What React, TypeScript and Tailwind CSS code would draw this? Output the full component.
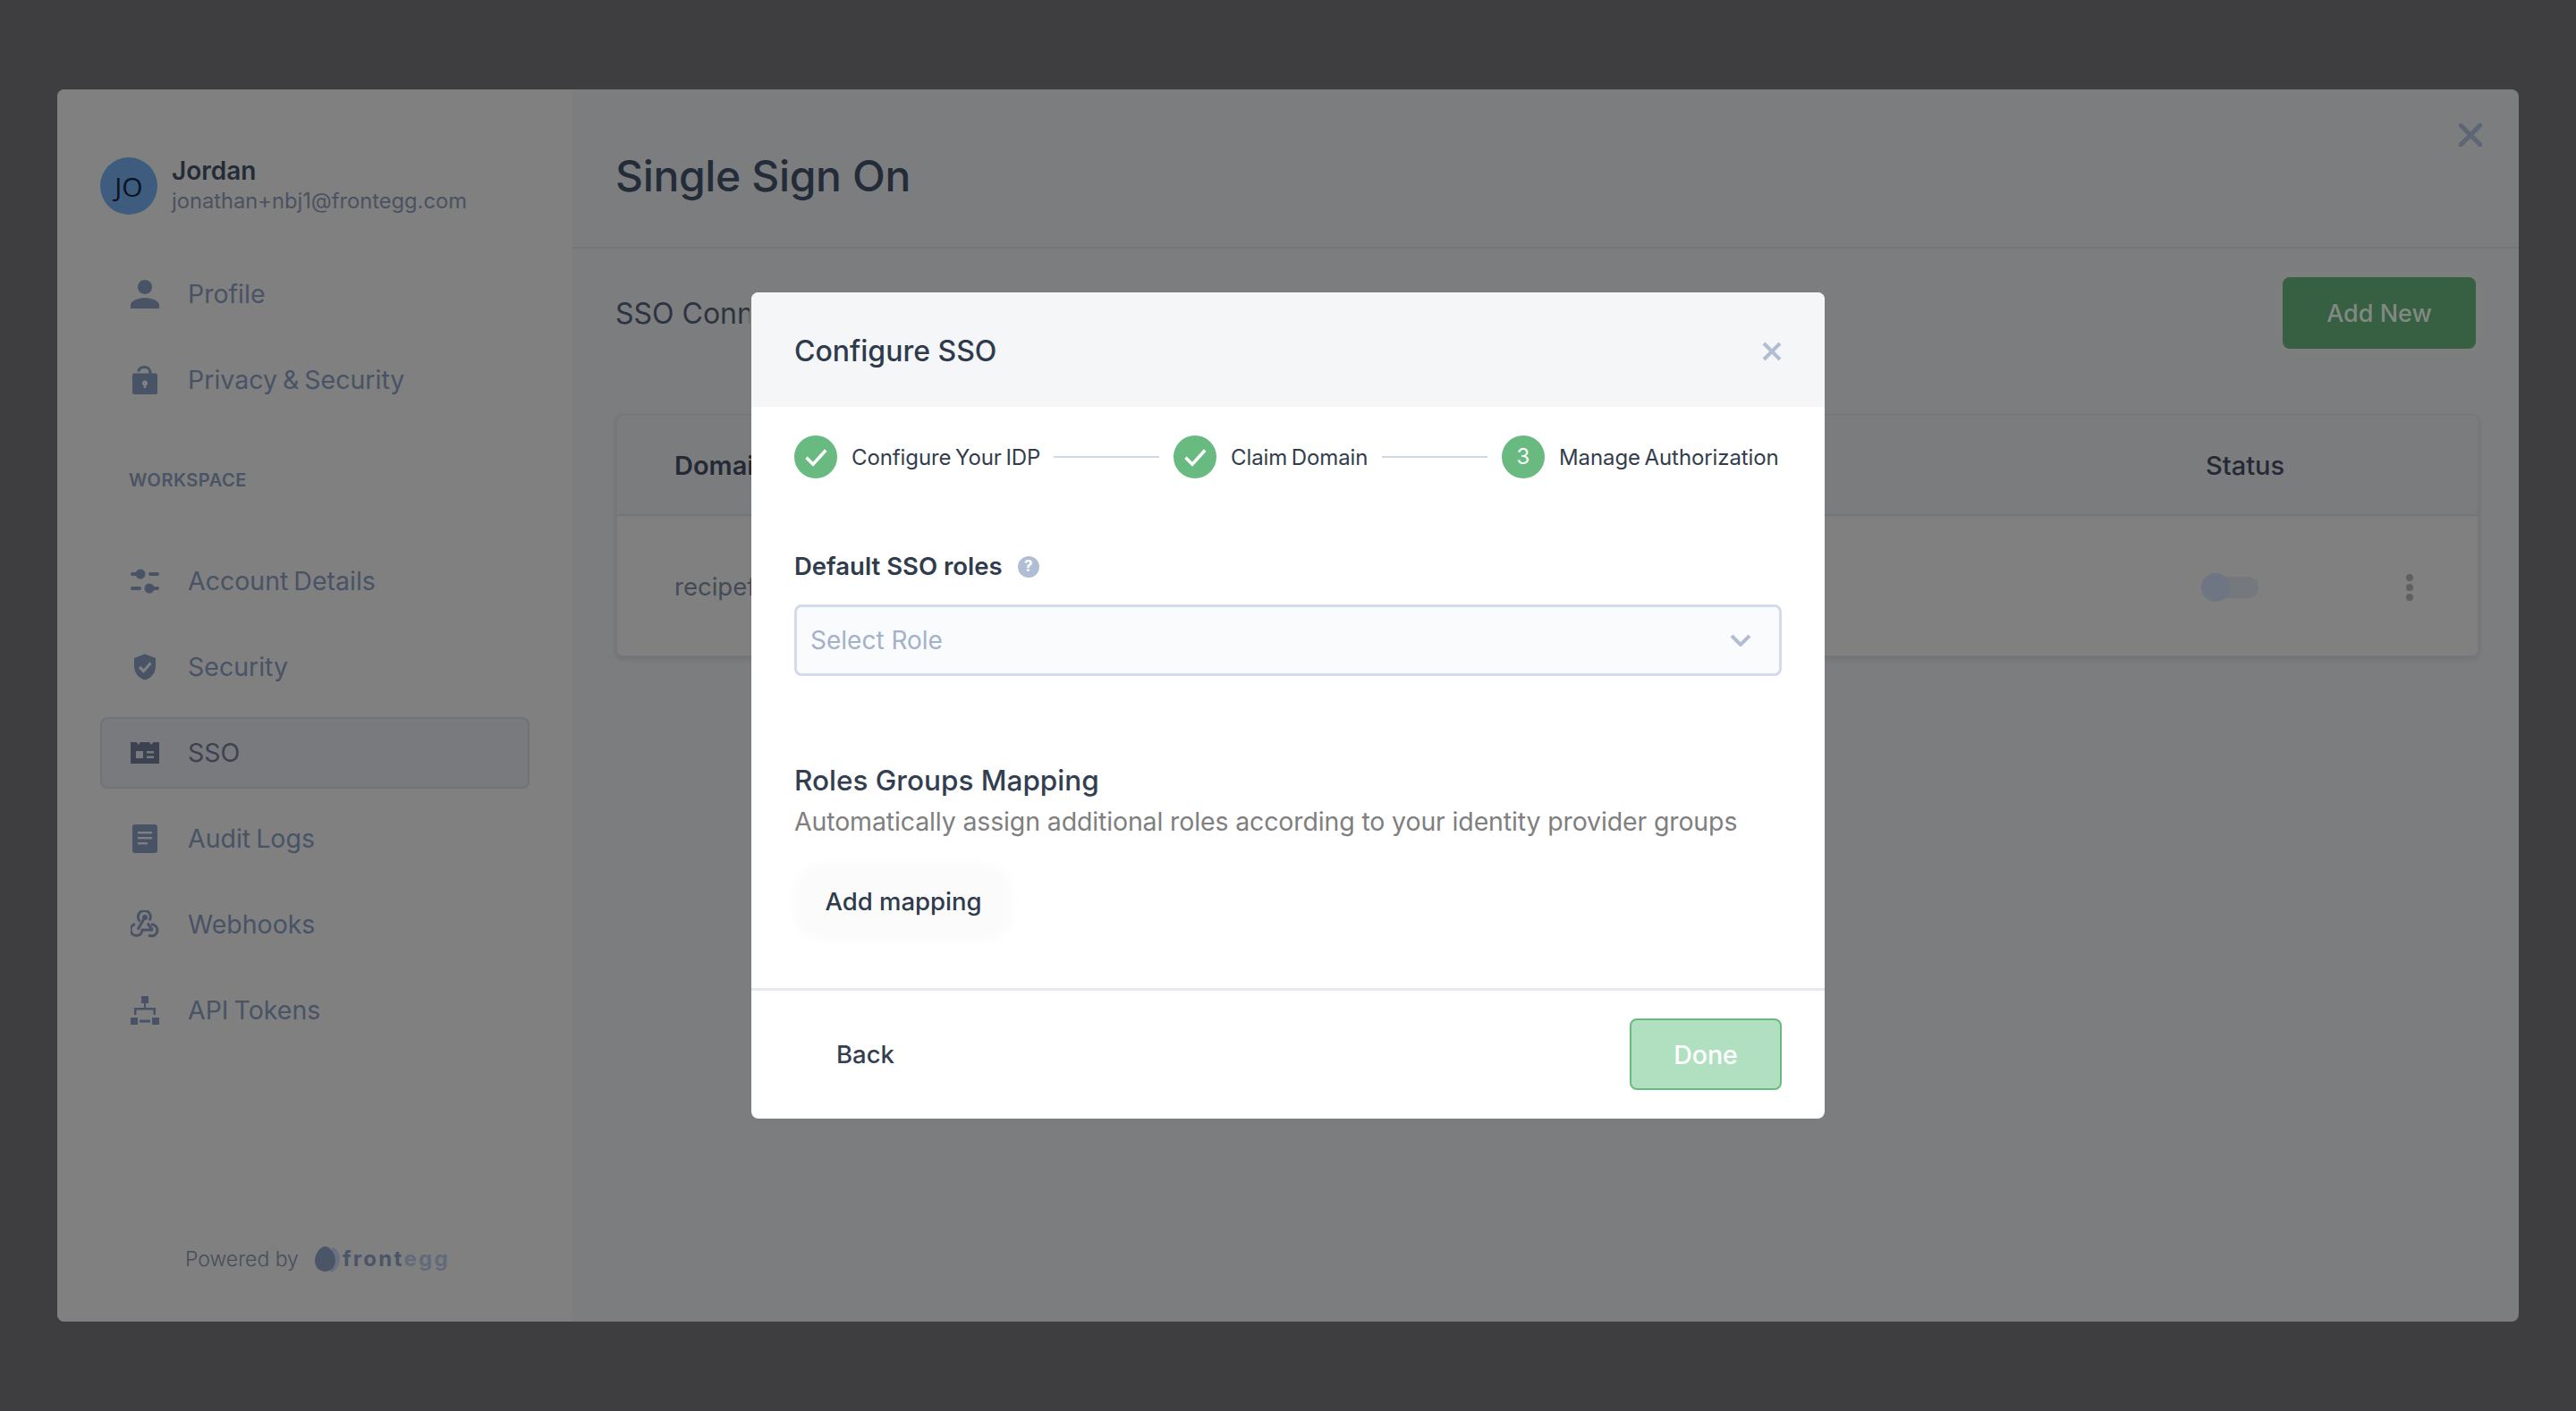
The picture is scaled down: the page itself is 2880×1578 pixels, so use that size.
import type { ReactNode } from 'react'

function ProfileIcon() {
  return (
    <svg viewBox="4 4 16 16" className="h-8 w-8 fill-current">
      <path d="M12 12c2.21 0 4-1.79 4-4s-1.79-4-4-4-4 1.79-4 4 1.79 4 4 4zm0 2c-2.67 0-8 1.34-8 4v2h16v-2c0-2.66-5.33-4-8-4z" />
    </svg>
  )
}

function LockIcon() {
  return (
    <svg viewBox="0 0 32 32" className="h-8 w-8">
      <path d="M8.500 6.500C9.500 3 12 1.500 15.500 1.500 19 1.500 22 4 22 8v3" fill="none" stroke="currentColor" strokeWidth="3" />
      <rect x="2" y="8.500" width="28" height="23.500" rx="2" fill="currentColor" />
      <circle cx="16" cy="19.500" r="3" fill="#808080" />
      <rect x="14.700" y="20" width="2.600" height="5" fill="#808080" />
    </svg>
  )
}

function SlidersIcon() {
  return (
    <svg viewBox="0 0 32 32" className="h-8 w-8 fill-current">
      <circle cx="11" cy="8" r="5.500" />
      <rect x="0" y="6" width="10" height="4" rx="2" />
      <rect x="20" y="6" width="12" height="4" rx="2" />
      <circle cx="21" cy="24" r="5.500" />
      <rect x="0" y="22" width="12" height="4" rx="2" />
      <rect x="22" y="22" width="10" height="4" rx="2" />
    </svg>
  )
}

function ShieldIcon() {
  return (
    <svg viewBox="0 0 32 32" className="h-8 w-8">
      <path d="M16 1.500 28 6v9c0 7.500-5 13.500-12 15.500C9 28.500 4 22.500 4 15V6z" fill="currentColor" />
      <path d="m10 16 4.500 4.500L22.500 11.500" fill="none" stroke="#808080" strokeWidth="3.200" />
    </svg>
  )
}

function SsoIcon() {
  return (
    <svg viewBox="0 0 32 32" className="h-8 w-8">
      <path d="M0 4h6.500l2.500 3 2-3h10l2 3 2.500-3H32v24H0z" fill="currentColor" />
      <rect x="6" y="14" width="8" height="8" fill="#797a7e" />
      <rect x="18" y="14" width="8" height="2.500" fill="#797a7e" />
      <rect x="18" y="19.500" width="8" height="2.500" fill="#797a7e" />
    </svg>
  )
}

function DocIcon() {
  return (
    <svg viewBox="0 0 32 32" className="h-8 w-8">
      <rect x="2" y="0" width="28" height="32" rx="3" fill="currentColor" />
      <rect x="8" y="8" width="16" height="2.400" fill="#808080" />
      <rect x="8" y="14" width="16" height="2.400" fill="#808080" />
      <rect x="8" y="20" width="11" height="2.400" fill="#808080" />
    </svg>
  )
}

function WebhookIcon() {
  return (
    <svg viewBox="0 0 32 32" className="h-8 w-8 fill-none stroke-current stroke-[3]">
      <path d="M10.500 12.500a7 7 0 1 1 10.500-1" />
      <path d="M5 15.500a6.500 6.500 0 1 0 8 6.500h12" />
      <path d="M19 14.500 24.500 22M16 8 8 21.500" />
      <path d="M23 15.800a6.500 6.500 0 1 1-3 12" />
      <circle cx="16" cy="8" r="1.500" />
    </svg>
  )
}

function TreeIcon() {
  return (
    <svg viewBox="0 0 32 32" className="h-8 w-8 fill-current">
      <rect x="12" y="0" width="8" height="8" />
      <rect x="15" y="8" width="2" height="5" />
      <path d="M4 13h24v8h-2.500v-5.500h-19V21H4z" />
      <rect x="0" y="24" width="8" height="8" />
      <rect x="24" y="24" width="8" height="8" />
      <rect x="10" y="26.500" width="12" height="3" />
    </svg>
  )
}

function NavRow({ icon, label, active }: { icon: ReactNode; label: string; active?: boolean }) {
  return (
    <div
      className={`flex h-20 w-[480px] items-center gap-8 rounded-lg border-2 px-8 text-[28.500px] [word-spacing:-2px] ${
        active ? 'border-[#707276] bg-[#797a7e] text-[#3c4250]' : 'border-transparent text-[#485366]'
      }`}
    >
      <span className="flex h-8 w-8 items-center justify-center">{icon}</span>
      <span>{label}</span>
    </div>
  )
}

function Step({ label, num, labelWidth }: { label: string; num?: number; labelWidth: string }) {
  return (
    <div className="flex items-center gap-4">
      <div className="flex h-12 w-12 items-center justify-center rounded-full bg-[#68ba80] text-[24px] text-white">
        {num ?? (
          <svg viewBox="0 0 24 24" className="h-9 w-9 fill-none stroke-white stroke-[2.400]">
            <path d="m5 12.500 5 5 9.500-10.500" />
          </svg>
        )}
      </div>
      <span className={`${labelWidth} whitespace-nowrap pt-0.5 text-[24px] tracking-[-0.1px] text-[#333d4c] [word-spacing:-2px]`}>
        {label}
      </span>
    </div>
  )
}

function ConfigureModal() {
  return (
    <div className="absolute inset-0 flex items-center justify-center">
      <div className="flex h-[924px] w-[1200px] flex-col overflow-hidden rounded-lg bg-white">
        <div className="flex h-32 shrink-0 items-center justify-between bg-[#f4f6f8] pl-12 pr-[48px] pt-1">
          <h2 className="text-[32px] font-medium text-[#2f3b4c]">Configure SSO</h2>
          <svg viewBox="0 0 22 22" className="h-[22px] w-[22px] fill-none stroke-[#b0bdd3] stroke-[4]">
            <path d="m2 2 18 18M20 2 2 20" />
          </svg>
        </div>

        <div className="flex flex-1 flex-col px-12">
          <div className="mt-8 flex items-center justify-between">
            <Step label="Configure Your IDP" labelWidth="w-[210px]" />
            <div className="h-0.5 w-[118px] bg-[#d0d9e6]" />
            <Step label="Claim Domain" labelWidth="w-[153px]" />
            <div className="h-0.5 w-[118px] bg-[#d0d9e6]" />
            <Step num={3} label="Manage Authorization" labelWidth="w-[249px]" />
          </div>

          <div className="mt-[87px] flex h-6 items-center gap-[17px]">
            <span className="text-[27.500px] font-semibold text-[#303c4c]">Default SSO roles</span>
            <span className="flex h-6 w-6 items-center justify-center rounded-full bg-[#b0bed5] text-[17px] font-bold text-white">
              ?
            </span>
          </div>

          <div className="mt-[30px] flex h-20 items-center justify-between rounded-lg border-[3px] border-[#d3dbe9] bg-[#fafbfc] pl-[15px] pr-[31px]">
            <span className="text-[28px] text-[#a3b1c9]">Select Role</span>
            <svg viewBox="0 0 24 14" className="h-3.5 w-6 fill-none stroke-[#b0bdd3] stroke-[4]">
              <path d="m2 2 10 10L22 2" />
            </svg>
          </div>

          <h3 className="mt-[97px] h-10 text-[31.500px] font-medium leading-10 text-[#333f50]">Roles Groups Mapping</h3>
          <p className="mt-1.5 h-10 whitespace-nowrap text-[28.500px] leading-10 tracking-[-0.14px] text-[#7f7f7f]">
            Automatically assign additional roles according to your identity provider groups
          </p>

          <div className="ml-2 mt-[35px] flex h-[70px] w-[228px] items-center justify-center rounded-3xl bg-[#fbfbfb] text-[27.500px] font-medium text-[#2f3b4c] shadow-[0_0_14px_8px_#fbfbfb]">
            Add mapping
          </div>
        </div>

        <div className="flex h-[146px] shrink-0 items-start justify-between border-t-[3px] border-[#e8eaf0] pl-[95px] pr-12 pt-[31px]">
          <span className="flex h-20 items-center pt-0.5 text-[27.500px] font-medium text-[#333f50]">Back</span>
          <div className="flex h-20 w-[170px] items-center justify-center rounded-lg border-2 border-[#68ba80] bg-[#b0e0c0] pt-0.5 text-[28.500px] font-medium text-white">
            Done
          </div>
        </div>
      </div>
    </div>
  )
}

export default function App() {
  return (
    <div className="relative h-[1578px] w-[2880px] overflow-hidden bg-[#3e3e40] px-16 py-[100px] font-[family-name:Inter,sans-serif]">
      <div className="relative flex h-full overflow-hidden rounded-lg bg-[#7c7d7f]">
        {/* Sidebar */}
        <aside className="flex w-[576px] shrink-0 flex-col bg-[#808080] pl-12 pt-[76px]">
          <div className="flex h-16 items-center gap-4">
            <div className="flex h-16 w-16 items-center justify-center rounded-full bg-[#3e5c7e] font-[family-name:'Open_Sans',sans-serif] text-[30px] text-[#0c1420]">
              JO
            </div>
            <div className="flex flex-col">
              <span className="-mt-0.5 text-[28px] font-semibold leading-9 text-[#242c37]">Jordan</span>
              <span className="text-[23.700px] leading-8 text-[#4a5260]">jonathan+nbj1@frontegg.com</span>
            </div>
          </div>

          <div className="mt-[49px] flex flex-col gap-4">
            <NavRow icon={<ProfileIcon />} label="Profile" />
            <NavRow icon={<LockIcon />} label="Privacy & Security" />
          </div>

          <div className="mb-[61px] ml-[32px] mt-[60px] h-6 text-[20px] font-semibold leading-6 tracking-[0.5px] text-[#4a5464]">
            WORKSPACE
          </div>

          <div className="flex flex-col gap-4">
            <NavRow icon={<SlidersIcon />} label="Account Details" />
            <NavRow icon={<ShieldIcon />} label="Security" />
            <NavRow icon={<SsoIcon />} label="SSO" active />
            <NavRow icon={<DocIcon />} label="Audit Logs" />
            <NavRow icon={<WebhookIcon />} label="Webhooks" />
            <NavRow icon={<TreeIcon />} label="API Tokens" />
          </div>

          <div className="mb-[54px] ml-[95px] mt-auto flex h-8 items-center">
            <span className="w-[144px] text-[23px] font-light text-[#474e5b]">Powered by</span>
            <svg viewBox="0 0 30 30" className="h-[30px] w-[30px]">
              <path d="M20 2c6 1 9 7 9 13s-4 15-11 15z" fill="#697280" />
              <path d="M12.500 1C18 1 24 9 24 17c0 7-5 12-11.500 12S1 24 1 17C1 9 7 1 12.500 1z" fill="#4a5568" />
            </svg>
            <span className="ml-0.5 text-[24px] font-bold tracking-[2.300px] text-[#4a5568]">
              front<span className="text-[#626b79]">egg</span>
            </span>
          </div>
        </aside>

        {/* Main */}
        <main className="flex min-w-0 flex-1 flex-col">
          <header className="flex h-[178px] shrink-0 items-center border-b-2 border-[#74757a] px-12 pt-[18px]">
            <h1 className="text-[48px] font-medium tracking-[-0.36px] text-[#232c38]">Single Sign On</h1>
          </header>

          <div className="flex flex-col pl-12 pr-12">
            <div className="mt-[32px] flex h-20 items-center justify-between">
              <span className="w-[150px] overflow-hidden whitespace-nowrap pt-0.5 text-[32px] text-[#2d3440]">SSO Connections</span>
              <div className="flex h-20 w-[216px] items-center justify-center rounded-lg bg-[#375f42] pt-0.5 text-[27px] font-medium text-[#808a82] shadow-[0_0_16px_6px_#7e807e]">
                Add New
              </div>
            </div>

            <div className="-mr-1 mt-[73px] overflow-hidden rounded-lg border-2 border-[#76777b] shadow-[0_2px_4px_#707175]">
              <div className="flex h-[112px] items-center border-b-2 border-[#74757a] bg-[#7b7c7e] pl-[64px] pt-0.5 text-[29px] font-semibold text-[#242a35]">
                <span className="flex-1">Domain</span>
                <span className="w-[304px] font-medium">Status</span>
              </div>
              <div className="flex h-[156px] items-center bg-[#808080] pl-[64px] pt-1">
                <div className="flex-1">
                  <span className="block w-[90px] overflow-hidden whitespace-nowrap text-[27.500px] text-[#434b58]">recipefinder.com</span>
                </div>
                <div className="flex w-[309px] items-center">
                  <div className="relative h-6 w-16 rounded-full bg-[#75787c]">
                    <div className="absolute -top-1 left-0 h-8 w-8 rounded-full bg-[#6d7682]" />
                  </div>
                  <div className="ml-[165px] flex flex-col gap-[3px]">
                    <span className="h-2 w-2 rounded-full bg-[#5f6062]" />
                    <span className="h-2 w-2 rounded-full bg-[#5f6062]" />
                    <span className="h-2 w-2 rounded-full bg-[#5f6062]" />
                  </div>
                </div>
              </div>
            </div>
          </div>
        </main>

        {/* Window close */}
        <svg viewBox="0 0 26 26" className="absolute right-[41px] top-[38px] h-[26px] w-[26px] fill-none stroke-[#5d6674] stroke-[5]">
          <path d="m2 2 22 22M24 2 2 24" strokeLinecap="round" />
        </svg>
      </div>

      <ConfigureModal />
    </div>
  )
}
